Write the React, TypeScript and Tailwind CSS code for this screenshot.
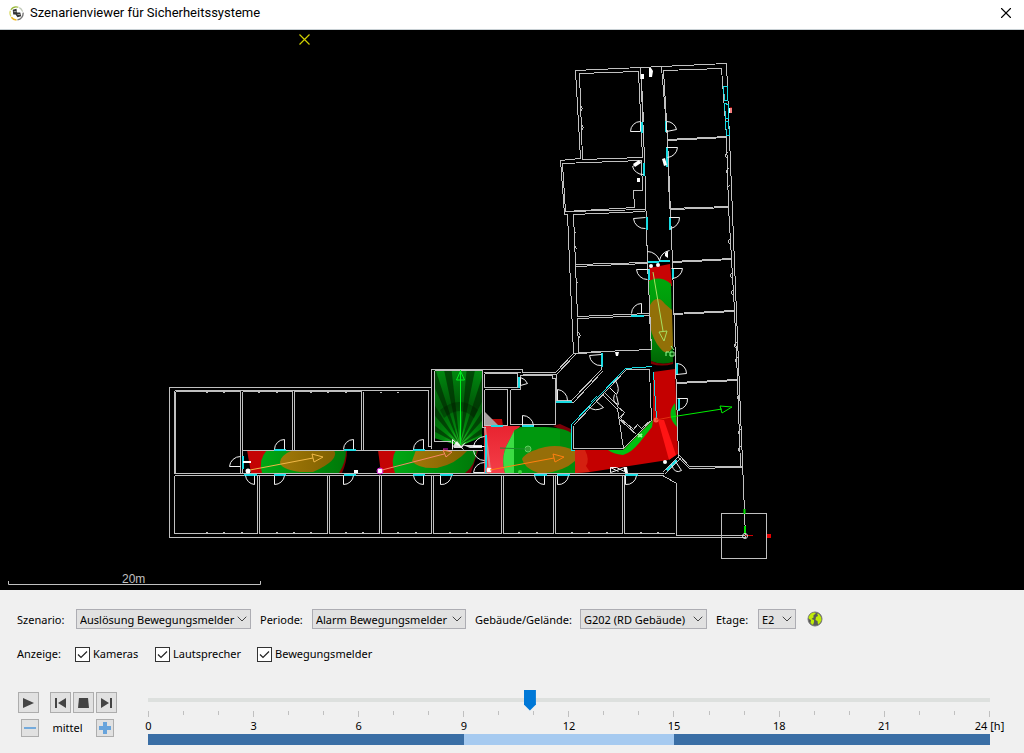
import { useState } from "react";
import { FiChevronDown, FiX } from "react-icons/fi";

interface selectProps {
  id: string;
  label: string;
  options: string[];
  labelClass: string;
  selectClass: string;
}

const LabeledSelect: React.FC<selectProps> = ({
  id,
  label,
  options,
  labelClass,
  selectClass,
}) => {
  return (
    <div className="flex items-center">
      <label htmlFor={id} className={`whitespace-nowrap pt-px ${labelClass}`}>
        {label}
      </label>
      <div className="relative">
        <select
          id={id}
          className={`block h-5 appearance-none border border-[#adadb3] bg-[#e1e1e1] pl-[3px] pt-px leading-[18px] outline-none ${selectClass}`}
        >
          {options.map((option) => (
            <option key={option}>{option}</option>
          ))}
        </select>
        <FiChevronDown className="pointer-events-none absolute right-px top-[2px] h-4 w-4 stroke-[1.5] text-[#444]" />
      </div>
    </div>
  );
};

interface checkProps {
  id: string;
  label: string;
}

const CheckField: React.FC<checkProps> = ({ id, label }) => {
  const [checked, setChecked] = useState(true);
  return (
    <div className="relative flex items-center gap-[3px]">
      <input
        id={id}
        type="checkbox"
        checked={checked}
        onChange={(e) => setChecked(e.target.checked)}
        className="h-[15px] w-[15px] appearance-none border border-[#333] bg-white"
      />
      {checked && (
        <svg
          viewBox="0 0 15 15"
          className="pointer-events-none absolute left-0 h-[15px] w-[15px]"
        >
          <path d="M3 7.5L6 10.5L12 4.5" fill="none" stroke="#222" strokeWidth="1.2" />
        </svg>
      )}
      <label htmlFor={id}>{label}</label>
    </div>
  );
};

interface iconButtonProps {
  label: string;
  small?: boolean;
  children: React.ReactNode;
}

const IconButton: React.FC<iconButtonProps> = ({ label, small, children }) => {
  return (
    <button
      aria-label={label}
      className={`flex items-center justify-center border border-[#adadad] bg-[#e1e1e1] ${
        small ? "h-[18px] w-[18px]" : "h-[21px] w-[21px]"
      }`}
    >
      <svg viewBox="0 0 16 16" className="h-4 w-4 shrink-0">
        {children}
      </svg>
    </button>
  );
};

const OUTLINE = [
  // outer walls
  "M726 63L661 66L640 67L575 70L580 158L560 160L564 214L567 214L573 353L555 372L522 372L522 369L431 369V387H169V537H745L726 63",
  // north wing, left side
  "M579 73L638 71L642 157L582 159L579 73",
  "M562 163L641 160L642 190H633L634 207L565 211L562 163",
  "M566 211L645 209M573 214L645 211M573 214L575 264L647 262",
  "M575 264L577 316L649 313M575 266L647 263M577 318L649 315L651 349L578 352L577 318",
  "M573 353L601 352M640 67L644 158L647 262L651 349M641 80L643 122",
  // north wing, right side
  "M661 67L667 138L672 262L675 363L678 456M664 70L721 68L726 136L667 139M663 70L667 138",
  "M667 140L726 137L728 206L669 208L667 140",
  "M670 209L728 207L731 258L672 261M672 262L731 259L734 310L673 313",
  "M673 314L734 311L737 379L677 382M677 383L737 380L740 466L741 467L689 468L678 457",
  "M679 455L689 466L741 466",
  // stairwell and service rooms
  "M434 370H482V427H485M434 370V441H450M431 387V448M484 373H517V387H484V373M484 389H507V425H484V389",
  "M510 389H520V375H552V378H555V424H510V389M483 372H520M522 374H556L575 354",
  "M556 374V400H571L601 369V362M556 402H573L602 371",
  // west wing, upper rooms
  "M174 390V473M174 390H428V446M175 391H240V473H175V391M242 391V472M242 450H482",
  "M242 391H292V450M294 450V391H361V450M363 450V391M428 446H431",
  // west wing, lower rooms
  "M174 473H663M174 475H662L676 483V535H745M174 475V533H257V475M259 475V533H327V475M329 475V533H379V475",
  "M381 475V533H431V475M433 475V533H501V475M503 475V533H553V475M555 475V533H622V475M624 475V533H674",
  "M662 472L678 456M664 474L680 458",
  // atrium
  "M573 425V448H623L651 420L649 369H626L573 425",
  "M602 394L618 410M604 392L618 406M617 406L624 412L618 418L636 434M624 412L620 418L633 429L637 424L641 428L650 420M617 408L623 448",
];

const DOORS = [
  "M640 131H630A10 10 0 0 1 640 121V131",
  "M666 121A10 10 0 0 1 676 129L666 131Z",
  "M666 147H677A11 11 0 0 1 667 157",
  "M641 161L632 166A11 11 0 0 0 643 174",
  "M645 217L633 218A11 11 0 0 0 645 228",
  "M669 217H679A11 11 0 0 1 670 228",
  "M647 251A13 13 0 0 1 659 260M669 250A13 13 0 0 0 659 260",
  "M648 269H636A11 11 0 0 0 647 279",
  "M671 268H682A11 11 0 0 1 672 278",
  "M641 313V303A10 10 0 0 0 631 313",
  "M601 354L589 355A11 11 0 0 0 601 365",
  "M677 363A10 10 0 0 1 686 373L676 374",
  "M677 398H687A10 10 0 0 1 678 409",
  "M557 400V389A11 11 0 0 1 567 400",
  "M520 385V377A11 11 0 0 1 527 383L520 385",
  "M522 425V415A11 11 0 0 1 533 425",
  "M284 449V439A10 10 0 0 0 274 449",
  "M353 449V439A10 10 0 0 0 343 449",
  "M423 449V439A10 10 0 0 0 413 449",
  "M240 466H229A11 11 0 0 1 240 456",
  "M254 475V484A10 10 0 0 1 245 475",
  "M274 475V484A10 10 0 0 0 284 475",
  "M343 475V484A10 10 0 0 0 353 475",
  "M423 475V484A10 10 0 0 1 413 475",
  "M440 475V484A10 10 0 0 0 451 475",
  "M544 475V484A10 10 0 0 1 534 475",
  "M557 475V484A10 10 0 0 0 568 475",
  "M625 475V484A10 10 0 0 0 636 475",
  "M484 436A12 12 0 0 0 473 446H484M484 460A11 11 0 0 1 473 450M484 462A11 11 0 0 0 473 472H484",
  "M452 449V439L463 449",
  "M588 406Q594 412 603 407L596 401M615 380Q620 389 616 394L609 387M614 394Q611 402 618 404L616 395",
  "M671 464Q674 474 681 470L675 461",
];

const OPENINGS = [
  "M641 121V132M665 120V131M666 146V166M643 162V175M646 216V229M669 216V229",
  "M648 262L670 260M648 268V279M672 267V278M630 315H643M601 352V366",
  "M676 362V374M678 397V410M555 401H571M518 376V387M521 425H533M490 425H502",
  "M273 449H285M343 449H355M412 449H424M242 455V468M243 474H256M273 474H285M343 474H355M412 474H424",
  "M439 474H452M533 474H546M556 474H569M624 474H637M485 434V472M666 470L676 460",
];

const GLAZING = [
  "M571 450V424L625 368L652 366M653 372L656 418M571 450H574",
  "M590 402L596 396M608 385L614 379",
  "M723 86H727V100H724ZM724 103L728 104V118H725ZM725 121H728L729 135H726Z",
];

const UPPER_PINS = [206, 223, 258, 276, 310, 327, 345, 380, 397];
const LOWER_PINS = [206, 223, 241, 276, 293, 310, 345, 362, 397, 415, 449, 466, 518, 536, 571, 588, 606, 640, 657];
const RIGHT_PINS = [
  [726, 155],
  [727, 171],
  [728, 188],
  [729, 241],
  [731, 275],
  [732, 292],
  [735, 345],
  [736, 360],
  [738, 397],
  [739, 432],
  [739, 449],
];

const FloorPlan = () => {
  return (
    <svg
      viewBox="0 30 1024 560"
      className="block w-full bg-black"
      role="img"
      aria-label="Grundriss"
    >
      <defs>
        <linearGradient id="cone" x1="0" y1="0" x2="0" y2="1">
          <stop offset="0" stopColor="#00a80c" />
          <stop offset=".6" stopColor="#00900a" />
          <stop offset="1" stopColor="#006404" />
        </linearGradient>
        <linearGradient id="coneWest" x1="0" y1="0" x2="1" y2="0">
          <stop offset="0" stopColor="#00a814" />
          <stop offset="1" stopColor="#007808" />
        </linearGradient>
        <linearGradient id="amber" x1="0" y1="0" x2="1" y2="0">
          <stop offset="0" stopColor="#a07808" />
          <stop offset="1" stopColor="#806000" />
        </linearGradient>
        <linearGradient id="rose" x1="0" y1="0" x2="0" y2="1">
          <stop offset="0" stopColor="#e82430" />
          <stop offset="1" stopColor="#f43e48" />
        </linearGradient>
        <radialGradient id="stairs" gradientUnits="userSpaceOnUse" cx="460" cy="445" r="78">
          <stop offset="0" stopColor="#30d830" />
          <stop offset=".22" stopColor="#00860c" />
          <stop offset=".55" stopColor="#005c08" />
          <stop offset="1" stopColor="#008a10" />
        </radialGradient>
        <clipPath id="stairClip">
          <path d="M434 370H482V437L460 446L434 438Z" />
        </clipPath>
      </defs>

      {/* stairwell sensor */}
      <g clipPath="url(#stairClip)">
        <path d="M434 370H482V446H434Z" fill="url(#stairs)" />
        <g fill="#002a02" fillOpacity=".65">
          <path d="M460 445L443 365L451 365Z" />
          <path d="M460 445L467 365L476 365Z" />
          <path d="M460 445L430 377L434 365Z" />
          <path d="M460 445L486 365L490 386Z" />
          <path d="M460 445L430 398L430 410Z" />
          <path d="M460 445L490 400L490 412Z" />
          <path d="M460 445L430 422L430 429Z" />
          <path d="M460 445L490 422L490 430Z" />
        </g>
        <path d="M440 410Q460 394 478 410L474 418Q460 404 444 418Z" fill="#001800" fillOpacity=".35" />
      </g>

      {/* corridor cameras */}
      <path d="M247 450H267V473H251Z" fill="#c40404" />
      <path d="M340 450H347Q347 462 342 473H336Z" fill="#7c0000" />
      <path d="M267 450H346Q346 462 339 473H262Q258 460 267 450Z" fill="url(#coneWest)" />
      <path d="M293 450H334Q340 460 313 472H300Q280 469 280 462Q281 455 293 450Z" fill="url(#amber)" />

      <path d="M378 450H397V473H381Z" fill="#c40404" />
      <path d="M470 451H478L471 473H464Z" fill="#7c0008" />
      <path d="M396 450H477Q475 466 465 473H395Q390 460 396 450Z" fill="url(#coneWest)" />
      <path d="M416 450H468Q456 464 437 468Q418 469 412 461Z" fill="url(#amber)" />

      <path d="M484 426H520L506 473H484Z" fill="url(#rose)" />
      <path d="M485 413L491 419H502L503 426H490Z" fill="#b40808" />
      <path d="M485 412L498 425H485Z" fill="#a8a0a0" />
      <path d="M553 426L560 424L571 429V434Z" fill="#780008" />
      <path
        d="M575 450H623L653 420V372L675 369L678 454L668 460L590 472L575 473Z"
        fill="#c40000"
      />
      <path d="M575 450H585Q590 460 586 466L590 472L575 473Z" fill="#d42010" />
      <path d="M520 427H545Q565 428 571 433V450H575V473H505Q500 456 509 441L515 430Z" fill="#008c0c" />
      <path d="M514 431V473H505Q500 456 509 441Z" fill="#3cdc44" />
      <path d="M514 430Q538 424 560 430V473H514Z" fill="#00a010" fillOpacity=".6" />
      <path d="M575 451Q562 444 545 447Q525 452 522 459Q524 468 538 473H545Q564 471 575 461Z" fill="#966e08" />
      <path d="M608 450H623L653 420L652 427L640 442Q631 453 623 455Q613 454 608 450Z" fill="#00c010" />
      <path d="M675 403Q665 415 677 427Z" fill="#00b810" />
      <path d="M658 420H664L676 455L669 460Z" fill="#ff1414" />
      <path d="M485 428L490 470" stroke="#c88" strokeWidth="2" />

      <path d="M649 268L670 264L672 286L649 282Z" fill="#c80404" />
      <path d="M649 281Q660 275 671 284L673 362Q662 366 651 361Z" fill="url(#cone)" />
      <path d="M651 361Q662 366 673 362V364Q662 367 651 364Z" fill="#7c0000" />
      <path d="M650 305Q657 293 665 304L672 310L673 346Q668 358 660 348Q653 340 650 326Z" fill="#927008" />

      <g transform="translate(.5 .5)" fill="none" shapeRendering="crispEdges">
        <g stroke="#c0c0c0">
          {OUTLINE.map((d) => (
            <path key={d} d={d} />
          ))}
          {UPPER_PINS.map((x) => (
            <path key={x} d={`M${x - 1} 392H${x + 1}`} />
          ))}
          {LOWER_PINS.map((x) => (
            <path key={x} d={`M${x - 1} 532H${x + 1}`} />
          ))}
          {RIGHT_PINS.map(([x, y]) => (
            <path key={y} d={`M${x + 1} ${y - 3}L${x - 1} ${y - 1}V${y + 1}L${x + 1} ${y + 3}`} />
          ))}
          <path d="M580 105L582 108L580 111M581 124L583 127L581 130M574 230L575 233M575 246L576 249M576 280L577 283M578 332L580 335L578 338" />
          <path d="M721 513H766V558H721Z" />
        </g>
        <g stroke="#18dce4">
          {GLAZING.map((d) => (
            <path key={d} d={d} />
          ))}
        </g>
        <g stroke="#18dce4" strokeWidth="2">
          {OPENINGS.map((d) => (
            <path key={d} d={d} />
          ))}
        </g>
      </g>
      <g transform="translate(.5 .5)" fill="none" stroke="#f0f0f0">
        {DOORS.map((d) => (
          <path key={d} d={d} />
        ))}
        <path d="M610 467H616L624 471V467L616 470L610 472V467L618 471" />
      </g>

      {/* sensor and camera symbols */}
      <g fill="#fff">
        <path d="M641 74H644V79H641ZM649 68H651L653 71L652 77H649ZM662 159L665 158L667 165L664 166Z" />
        <path d="M633 164L639 160L641 163L635 167ZM637 178H640V182H637ZM665 253L668 251V258L665 256Z" />
        <path d="M243 461H251V463H243ZM354 470H358V473H354ZM615 352H619L618 356H616Z" />
        <circle cx="248" cy="471" r="2.5" />
        <circle cx="380" cy="471" r="2.5" />
        <circle cx="489" cy="470" r="2.5" />
        <circle cx="651" cy="266" r="2" />
        <circle cx="658" cy="265" r="2" />
        <circle cx="665" cy="462" r="2" />
        <path d="M624 467H627L628 473H625ZM729 108H732V113H729Z" />
        <path d="M453 446L457 441L461 446L466 442L462 448H454ZM463 445H482V448H470Z" fillOpacity=".85" />
      </g>
      <path d="M731 107V113" stroke="#e00" />
      <path d="M443 449H448" stroke="#e020d0" />
      <circle cx="380" cy="471" r="3" fill="none" stroke="#e020e0" />
      <circle cx="489" cy="470" r="3" fill="none" stroke="#f66" />
      <circle cx="528" cy="449" r="3" fill="#30a030" stroke="#60d060" />
      <circle cx="520" cy="472" r="2" fill="#40d840" />
      <circle cx="656" cy="420" r="2.5" fill="#f66048" />
      <path d="M638 434L642 437M642 434L638 437" stroke="#90ff90" strokeWidth="2" />
      <path d="M666 356V352H669M670 352H674V356H670ZM671 346L674 350" fill="none" stroke="#90ff90" />

      {/* view directions */}
      <g fill="none">
        <path d="M250 470L313 458M312 454L323 457L314 462Z" stroke="#f0b848" />
        <path d="M382 470L444 454M443 450L452 452L446 457Z" stroke="#f88868" />
        <path d="M490 470L554 458M553 454L564 457L555 462Z" stroke="#ff8010" />
        <path d="M656 420L671 417" stroke="#e03010" />
        <path d="M671 417L722 409M720 406L732 407L722 413Z" stroke="#00f000" />
        <path d="M653 272L663 331M659 332L667 331L664 341Z" stroke="#a8e060" />
        <path d="M460.5 444V370M456.5 380H464.5L460.5 371Z" stroke="#00f020" />
        <path d="M500 448L526 449" stroke="#208830" />
      </g>

      {/* origin gizmo */}
      <path d="M744.5 509V514M745 526V534" stroke="#00e000" strokeWidth="2" />
      <path d="M745 535.5H753" stroke="#d00000" />
      <path d="M767 534H771V538H767Z" fill="#e80000" />
      <circle cx="745" cy="536" r="2.5" fill="none" stroke="#ddd" />

      <path
        d="M299.5 34.5L309.5 44.5M309.5 34.5L299.5 44.5"
        fill="none"
        stroke="#d0d000"
        strokeWidth="1.2"
      />
      <path d="M8.5 581V584.5H260.5V581" fill="none" stroke="#c0c0c0" />
      <text x="122" y="583" fill="#c0c0c0" fontSize="12" fontFamily="Liberation Sans, sans-serif">
        20m
      </text>
    </svg>
  );
};

const HOURS = Array.from({ length: 25 }, (_, i) => i);
const MAJOR_HOURS = HOURS.filter((h) => h % 3 === 0);

const Timeline = () => {
  const [time, setTime] = useState(10.87);
  return (
    <div className="flex flex-1 flex-col">
      <input
        type="range"
        aria-label="Uhrzeit"
        min={0}
        max={24}
        step={0.01}
        value={time}
        onChange={(e) => setTime(Number(e.target.value))}
        className="block h-[21px] w-full appearance-none bg-transparent [&::-webkit-slider-runnable-track]:h-1 [&::-webkit-slider-runnable-track]:bg-[#dde0de] [&::-webkit-slider-thumb]:-mt-2 [&::-webkit-slider-thumb]:h-[21px] [&::-webkit-slider-thumb]:w-3 [&::-webkit-slider-thumb]:appearance-none [&::-webkit-slider-thumb]:bg-[#0078d7] [&::-webkit-slider-thumb]:[clip-path:polygon(0_0,100%_0,100%_72%,50%_100%,0_72%)]"
      />
      <div className="mt-px flex h-[7px] justify-between">
        {HOURS.map((h) => (
          <span
            key={h}
            className={`w-px bg-[#c0c0c0] ${h % 3 === 0 ? "h-[6px]" : "h-1"}`}
          />
        ))}
      </div>
      <div className="flex h-4 justify-between leading-4">
        {MAJOR_HOURS.map((h) => (
          <span key={h} className="flex w-px justify-center whitespace-nowrap">
            {h === 24 ? "24 [h]" : h}
          </span>
        ))}
      </div>
      <div className="flex h-[11px] bg-[#3a6ea5]">
        <div className="w-3/8" />
        <div className="w-1/4 bg-[#a6caf0]" />
      </div>
    </div>
  );
};

const App = () => {
  return (
    <div className="bg-[#f0f0f0] font-['Noto_Sans',sans-serif] text-[11px] leading-4 text-black">
      <header className="flex h-[30px] items-center border-b border-[#c8d0d4] bg-white pb-[3px] pl-[9px] pr-[9px]">
        <svg viewBox="0 0 16 16" className="mr-[6px] h-[15px] w-[15px]">
          <path d="M2 11A6.8 6.8 0 0 1 1.5 5" fill="none" stroke="#d8d860" strokeWidth="1.3" />
          <path d="M2 4A7 7 0 0 1 10 1.3" fill="none" stroke="#98b838" strokeWidth="1.3" />
          <path d="M11 1.7A7 7 0 0 1 14.5 6" fill="none" stroke="#c0c8b8" strokeWidth="1.3" />
          <path d="M15 7A7 7 0 0 1 9 14.8" fill="none" stroke="#777" strokeWidth="1.5" />
          <path d="M2.5 12A7 7 0 0 0 8 15" fill="none" stroke="#f0b820" strokeWidth="1.5" />
          <path d="M4 4L8 3L8.5 7L12 7L13 11L9 12L7 9L4.5 9Z" fill="#333" />
          <path d="M5 6H8M9 9H12" stroke="#aaa" />
        </svg>
        <h1 className="flex-1 font-[Roboto,sans-serif] text-[13px] leading-5">
          Szenarienviewer für Sicherheitssysteme
        </h1>
        <button aria-label="Schließen">
          <FiX className="h-[18px] w-[18px] stroke-[1.5]" />
        </button>
      </header>

      <FloorPlan />

      <div className="flex flex-col pb-2 pl-[17px] pr-[34px] pt-[19px]">
        <div className="flex items-center gap-[9px]">
          <LabeledSelect
            id="szenario"
            label="Szenario:"
            options={["Auslösung Bewegungsmelder"]}
            labelClass="w-[59px]"
            selectClass="w-[175px]"
          />
          <LabeledSelect
            id="periode"
            label="Periode:"
            options={["Alarm Bewegungsmelder"]}
            labelClass="w-[52px]"
            selectClass="w-[154px]"
          />
          <LabeledSelect
            id="gebaeude"
            label="Gebäude/Gelände:"
            options={["G202 (RD Gebäude)"]}
            labelClass="w-[105px]"
            selectClass="w-[127px]"
          />
          <LabeledSelect
            id="etage"
            label="Etage:"
            options={["E2"]}
            labelClass="w-[42px]"
            selectClass="w-[38px]"
          />
          <button aria-label="Karte" className="ml-[2px]">
            <svg viewBox="0 0 16 16" className="h-4 w-4">
              <circle cx="8" cy="8" r="7" fill="#5a5a5a" stroke="#777" />
              <path
                d="M1.500 6L4 2.500L7 1.500L9 2L6 5L7 6L4.500 8L7 9L7 11L6 14L3.500 12L4 9L2 8Z"
                fill="#c0ec08"
              />
              <path
                d="M10 2.500L12 3L14 6L14.500 9L13 12L11 13.500L10.500 10L8.500 9L9 6L11 5Z"
                fill="#c0ec08"
              />
            </svg>
          </button>
        </div>

        <div className="mt-[15px] flex h-5 items-center">
          <span className="w-[58px]">Anzeige:</span>
          <div className="w-20">
            <CheckField id="kameras" label="Kameras" />
          </div>
          <div className="w-[102px]">
            <CheckField id="lautsprecher" label="Lautsprecher" />
          </div>
          <CheckField id="melder" label="Bewegungsmelder" />
        </div>

        <div className="mt-[25px] flex items-start">
          <div className="flex w-[131px] flex-col gap-[6px] pl-px pt-[3px]">
            <div className="flex gap-[2px]">
              <div className="mr-[9px]">
                <IconButton label="Abspielen">
                  <path d="M2 3L13 8L2 13Z" fill="#444" />
                </IconButton>
              </div>
              <IconButton label="Zum Anfang">
                <path d="M2 3H4V13H2ZM13 3V13L5 8Z" fill="#444" />
              </IconButton>
              <IconButton label="Stopp">
                <path d="M3 3H12L13 13H2Z" fill="#444" />
              </IconButton>
              <IconButton label="Zum Ende">
                <path d="M2 3V13L10 8ZM11 3H13V13H11Z" fill="#444" />
              </IconButton>
            </div>
            <div className="flex w-[96px] items-center justify-between pl-[3px]">
              <IconButton label="Langsamer" small>
                <path d="M2 7H14V9H2Z" fill="#74aadc" />
              </IconButton>
              <span>mittel</span>
              <IconButton label="Schneller" small>
                <path d="M6 2H10V6H14V10H10V14H6V10H2V6H6Z" fill="#68a4dc" />
              </IconButton>
            </div>
          </div>
          <Timeline />
        </div>
      </div>
    </div>
  );
};

export default App;
